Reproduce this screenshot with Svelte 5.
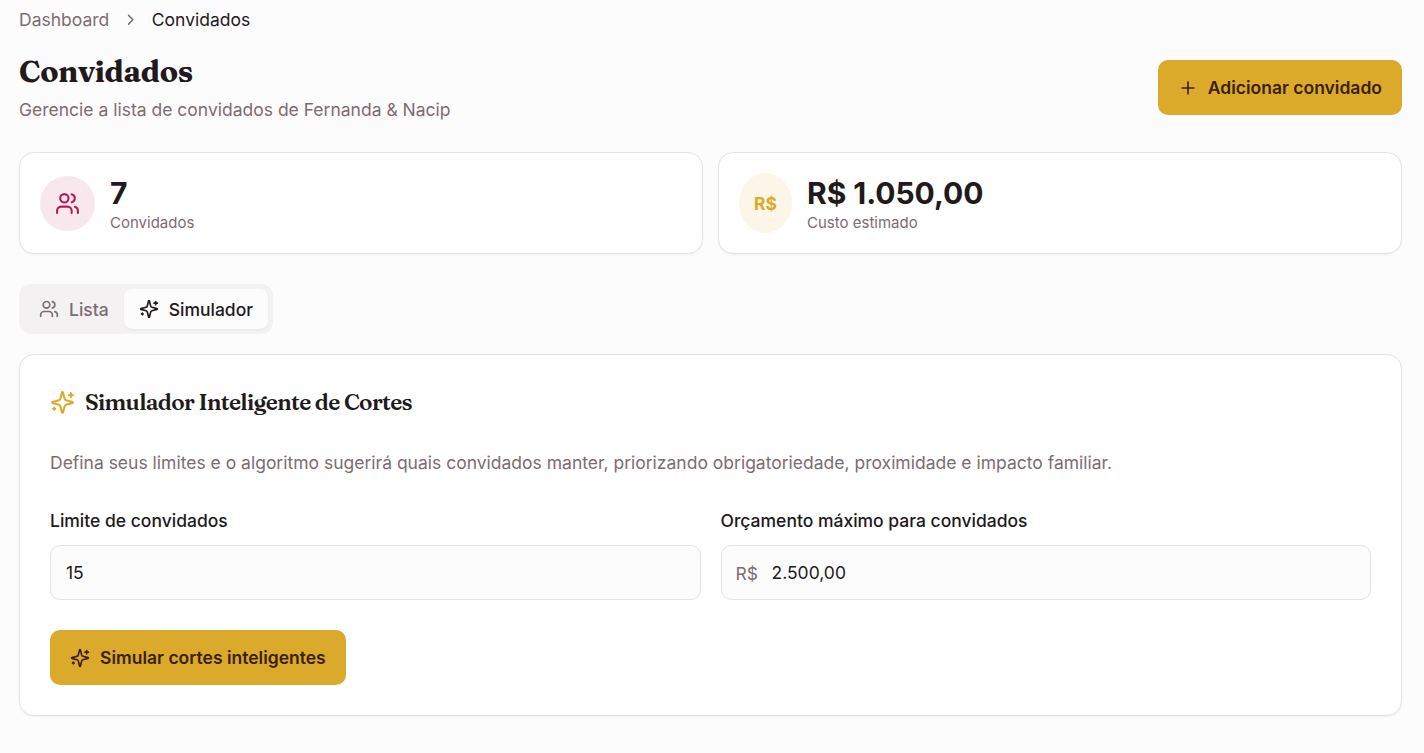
<script lang="ts">
  let tab = $state('simulador');
  let limite = $state('15');
  let orcamento = $state('2.500,00');
</script>

{#snippet users(size: number)}
  <svg class="icon" width={size} height={size} viewBox="0 0 24 24">
    <path d="M16 21v-2a4 4 0 0 0-4-4H6a4 4 0 0 0-4 4v2" />
    <circle cx="9" cy="7" r="4" />
    <path d="M22 21v-2a4 4 0 0 0-3-3.87" />
    <path d="M16 3.13a4 4 0 0 1 0 7.75" />
  </svg>
{/snippet}

{#snippet sparkles(size: number)}
  <svg class="icon" width={size} height={size} viewBox="0 0 24 24">
    <path d="M9.937 15.5A2 2 0 0 0 8.5 14.063l-6.135-1.582a.5.5 0 0 1 0-.962L8.5 9.936A2 2 0 0 0 9.937 8.5l1.582-6.135a.5.5 0 0 1 .963 0L14.063 8.5A2 2 0 0 0 15.5 9.937l6.135 1.581a.5.5 0 0 1 0 .964L15.5 14.063a2 2 0 0 0-1.437 1.437l-1.582 6.135a.5.5 0 0 1-.963 0z" />
    <path d="M20 3v4" />
    <path d="M22 5h-4" />
    <path d="M4 17v2" />
    <path d="M5 18H3" />
  </svg>
{/snippet}

<main class="page">
  <nav class="breadcrumb">
    <span>Dashboard</span>
    <svg class="icon" width="17.5" height="17.5" viewBox="0 0 24 24"><path d="m9 18 6-6-6-6" /></svg>
    <span class="current">Convidados</span>
  </nav>

  <header class="header">
    <div>
      <h1>Convidados</h1>
      <p class="subtitle">Gerencie a lista de convidados de Fernanda &amp; Nacip</p>
    </div>
    <button class="btn">
      <svg class="icon" width="20" height="20" viewBox="0 0 24 24"><path d="M5 12h14" /><path d="M12 5v14" /></svg>
      Adicionar convidado
    </button>
  </header>

  <section class="stats">
    <div class="card stat">
      <div class="badge badge-pink">{@render users(25)}</div>
      <div>
        <div class="value">7</div>
        <div class="label">Convidados</div>
      </div>
    </div>
    <div class="card stat">
      <div class="badge badge-gold">R$</div>
      <div>
        <div class="value">R$ 1.050,00</div>
        <div class="label">Custo estimado</div>
      </div>
    </div>
  </section>

  <div class="tabs">
    <button class="tab" class:active={tab === 'lista'} onclick={() => (tab = 'lista')}>
      {@render users(20)} Lista
    </button>
    <button class="tab" class:active={tab === 'simulador'} onclick={() => (tab = 'simulador')}>
      {@render sparkles(20)} Simulador
    </button>
  </div>

  <section class="card simulator">
    <h2>
      {@render sparkles(25)}
      <span>Simulador Inteligente de Cortes</span>
    </h2>
    <p class="description">
      Defina seus limites e o algoritmo sugerirá quais convidados manter, priorizando obrigatoriedade, proximidade e impacto familiar.
    </p>

    <div class="fields">
      <div class="field">
        <label for="limite">Limite de convidados</label>
        <div class="control">
          <input id="limite" bind:value={limite} />
        </div>
      </div>
      <div class="field">
        <label for="orcamento">Orçamento máximo para convidados</label>
        <div class="control control-money">
          <span class="prefix">R$</span>
          <input id="orcamento" bind:value={orcamento} />
        </div>
      </div>
    </div>

    <button class="btn">{@render sparkles(20)} Simular cortes inteligentes</button>
  </section>
</main>

<style>
  :global(body) {
    margin: 0;
    background: #fcfcfc;
  }

  .page {
    box-sizing: border-box;
    min-height: 753px;
    padding: 7px 22px 37px 19px;
    font-family: Inter, sans-serif;
    font-size: 17.5px;
    line-height: 25px;
    color: #21191c;
  }

  h1,
  h2,
  p {
    margin: 0;
  }

  button,
  input {
    font: inherit;
    color: inherit;
  }

  .icon {
    flex-shrink: 0;
    fill: none;
    stroke: currentColor;
    stroke-width: 2;
    stroke-linecap: round;
    stroke-linejoin: round;
  }

  /* Breadcrumb */
  .breadcrumb {
    display: flex;
    align-items: center;
    gap: 12.5px;
    color: #7c6c72;
  }

  .current {
    color: #21191c;
  }

  /* Header */
  .header {
    display: flex;
    align-items: center;
    justify-content: space-between;
    margin-top: 20px;
  }

  h1 {
    font-family: Fraunces, 'Liberation Serif', serif;
    font-size: 30px;
    font-weight: 700;
    line-height: 40px;
    letter-spacing: -0.28px;
  }

  .subtitle {
    margin: 5px 0 1px;
    color: #7c6c72;
  }

  .btn {
    display: inline-flex;
    align-items: center;
    gap: 10px;
    height: 55px;
    padding: 0 20px;
    border: 0;
    border-radius: 10px;
    background: #dbaa2b;
    color: #3a210d;
    font-weight: 600;
    white-space: nowrap;
    cursor: pointer;
  }

  /* Cards */
  .card {
    box-sizing: border-box;
    background: #fff;
    border: 1px solid #e6e2e4;
    border-radius: 15px;
    box-shadow: 0 1px 2px rgba(0, 0, 0, 0.05);
  }

  .stats {
    display: grid;
    grid-template-columns: 1fr 1fr;
    gap: 15px;
    margin-top: 29px;
  }

  .stat {
    display: flex;
    align-items: center;
    gap: 15px;
    height: 102px;
    padding: 0 20px;
  }

  .badge {
    display: flex;
    align-items: center;
    justify-content: center;
    border-radius: 50%;
  }

  .badge-pink {
    width: 55px;
    height: 55px;
    background: #f8e8ee;
    color: #b01e57;
  }

  .badge-gold {
    width: 53px;
    height: 60px;
    background: #fcf6e9;
    color: #dbaa2b;
    font-weight: 700;
  }

  .value {
    font-size: 30px;
    font-weight: 700;
    line-height: 40px;
    letter-spacing: -0.05px;
  }

  .label {
    font-size: 15px;
    line-height: 20px;
    color: #7c6c72;
  }

  /* Tabs */
  .tabs {
    display: flex;
    box-sizing: border-box;
    width: fit-content;
    height: 50px;
    margin-top: 30px;
    padding: 5px;
    border-radius: 12px;
    background: #f3f1f2;
  }

  .tab {
    display: flex;
    align-items: center;
    gap: 10px;
    padding: 0 15px;
    border: 0;
    border-radius: 8px;
    background: transparent;
    color: #7c6c72;
    font-weight: 500;
    cursor: pointer;
  }

  .tab.active {
    background: #fcfcfc;
    color: #21191c;
    box-shadow: 0 1px 2px rgba(0, 0, 0, 0.06);
  }

  /* Simulator */
  .simulator {
    height: 362px;
    margin-top: 20px;
    padding: 30px;
  }

  h2 {
    display: flex;
    align-items: center;
    gap: 10px;
    height: 35px;
    font-family: Fraunces, 'Liberation Serif', serif;
    font-size: 22.5px;
    font-weight: 600;
    letter-spacing: -0.66px;
    white-space: nowrap;
  }

  h2 .icon {
    color: #dbaa2b;
  }

  .description {
    margin-top: 30px;
    color: #7c6c72;
    white-space: nowrap;
  }

  .fields {
    display: grid;
    grid-template-columns: 1fr 1fr;
    gap: 20px;
    margin: 33px 0 30px;
  }

  label {
    display: block;
    margin-bottom: 12px;
    font-weight: 500;
  }

  .control {
    display: flex;
    align-items: center;
    box-sizing: border-box;
    height: 55px;
    padding: 0 15px;
    border: 1px solid #e6e2e4;
    border-radius: 10px;
    background: #fcfcfc;
  }

  .control-money {
    padding-left: 14px;
  }

  .prefix {
    margin-right: 13.5px;
    padding-top: 2px;
    color: #7c6c72;
  }

  input {
    flex: 1;
    min-width: 0;
    padding: 0;
    border: 0;
    outline: 0;
    background: transparent;
  }
</style>
